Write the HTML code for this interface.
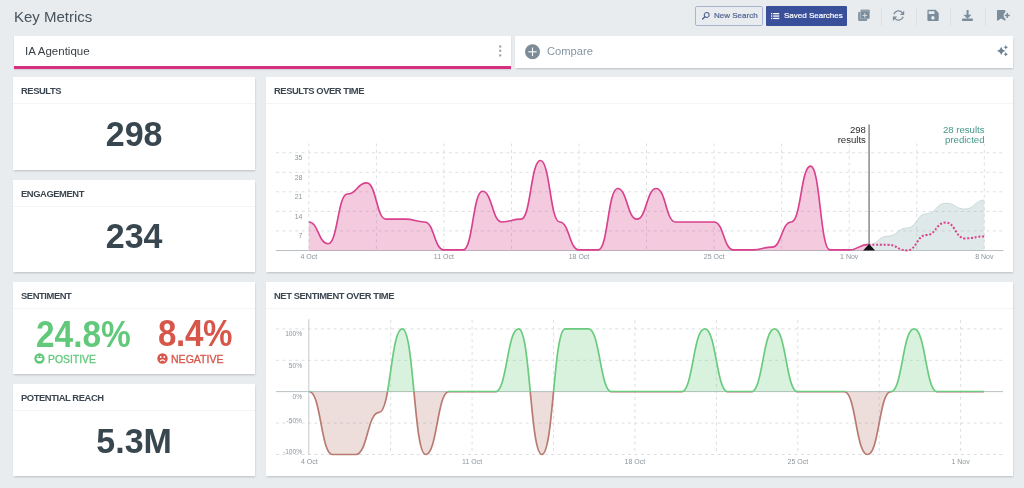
<!DOCTYPE html>
<html><head><meta charset="utf-8">
<style>
html,body{margin:0;padding:0;}
.abs,.card,.btn{will-change:transform;}
body{width:1024px;height:488px;overflow:hidden;background:#e9ecef;font-family:"Liberation Sans",sans-serif;position:relative;color:#3c4852;}
.abs{position:absolute;}
.title{left:13.5px;top:7px;font-size:15px;line-height:20px;color:#47525c;}
.btn{position:absolute;box-sizing:border-box;font-size:8px;line-height:18px;white-space:nowrap;}
.btn span{-webkit-text-stroke:0.2px currentColor;}
.nbtn{left:695px;top:6px;width:68px;height:20px;border:1px solid #a9b3d2;border-radius:2px;color:#51618f;background:transparent;}
.sbtn{left:766px;top:6px;width:81px;height:19.5px;background:#3a4f9a;color:#fff;border-radius:1px;}
.sep{position:absolute;top:6.5px;width:1px;height:19px;background:#dde1e5;}
.card{position:absolute;background:#fff;box-shadow:0 1px 2px -0.5px rgba(0,0,0,0.2);}
.hdr{position:absolute;left:0;right:0;top:0;height:26px;border-bottom:1px solid #f3f4f6;}
.hdr span{position:absolute;left:8px;top:8.8px;font-size:9.4px;font-weight:bold;line-height:10px;color:#3b4650;letter-spacing:-0.42px;white-space:nowrap;}
.big{position:absolute;left:0;right:0;text-align:center;font-weight:bold;font-size:34px;color:#37464f;line-height:34px;transform:scaleY(1.04);transform-origin:50% 0;}
svg text{font-family:"Liberation Sans",sans-serif;}
.g{stroke:#dcdfe2;stroke-width:1;stroke-dasharray:3 3.4;}
.yl{font-size:6.6px;fill:#8c959c;}
.yl1{font-size:6.9px;fill:#8c959c;}
.xl{font-size:7px;fill:#8c959c;}
.mk{font-size:9.6px;fill:#2b2b2b;}
.pr{font-size:9.6px;fill:#45998a;}
</style></head>
<body>
<div class="abs title">Key Metrics</div>

<div class="btn nbtn"><svg class="abs" style="left:4.5px;top:4px" width="10" height="10" viewBox="0 0 10 10"><circle cx="5.7" cy="4" r="2.45" fill="none" stroke="#51618f" stroke-width="1.05"/><line x1="3.9" y1="5.8" x2="1.6" y2="8.1" stroke="#51618f" stroke-width="1.35" stroke-linecap="round"/></svg><span class="abs" style="left:18px;top:0.3px">New Search</span></div>
<div class="btn sbtn"><svg class="abs" style="left:5px;top:6.5px" width="10" height="8" viewBox="0 0 10 8" fill="#fff"><rect x="0" y="0" width="1.3" height="1.3"/><rect x="0" y="2.4" width="1.3" height="1.3"/><rect x="0" y="4.8" width="1.3" height="1.3"/><rect x="2.2" y="0" width="6.1" height="1.3"/><rect x="2.2" y="2.4" width="6.1" height="1.3"/><rect x="2.2" y="4.8" width="6.1" height="1.3"/></svg><span class="abs" style="left:18px;top:1px">Saved Searches</span></div>

<!-- toolbar icons -->
<svg class="abs" style="left:850px;top:0" width="174" height="34" viewBox="850 0 174 34">
 <g fill="#7b8c9a">
  <!-- copy plus -->
  <rect x="858.1" y="11.9" width="9.1" height="9" rx="1.2" fill="#8595a2"/>
  <rect x="860.3" y="9.5" width="9.6" height="9.6" rx="1" fill="#e3e7ea"/>
  <rect x="860.6" y="9.8" width="9" height="9" rx="0.9"/>
  <rect x="860.6" y="9.8" width="9" height="1.9" fill="#93a1ac"/>
  <rect x="862.5" y="14.9" width="4.6" height="1" fill="#d5dce1"/>
  <rect x="864.3" y="13.1" width="1" height="4.6" fill="#d5dce1"/>
  <!-- save -->
  <path d="M928.2,9.8 h7.4 l3.1,3.1 v7.2 a0.8,0.8 0 0 1 -0.8,0.8 h-9.7 a0.8,0.8 0 0 1 -0.8,-0.8 v-9.5 a0.8,0.8 0 0 1 0.8,-0.8 z M928.7,11.2 v2.8 h5.8 v-2.8 z M932.9,16 a1.75,1.75 0 1 0 0.01,0 z" fill-rule="evenodd"/>
  <!-- download -->
  <rect x="966.6" y="10" width="2" height="5.2"/>
  <path d="M963.4,14.8 h8.2 l-4.1,3.9 z"/>
  <rect x="961.9" y="18.6" width="11.1" height="2.3" rx="0.9"/>
  <!-- bookmark plus -->
  <path d="M997.9,9.9 h6.6 a0.9,0.9 0 0 1 0.9,0.9 v1.2 a4.1,4.1 0 0 0 0,6.8 v2.2 l-4.2,-2.6 -4.2,2.6 v-10.2 a0.9,0.9 0 0 1 0.9,-0.9 z"/>
  <rect x="1004.8" y="14.7" width="5" height="1.5"/>
  <rect x="1006.55" y="12.95" width="1.5" height="5"/>
 </g>
 <!-- refresh -->
 <g fill="none" stroke="#7b8c9a" stroke-width="1.35">
  <path d="M893.9,14.2 a4.9,4.9 0 0 1 8.4,-1.6"/>
  <path d="M903.2,16.8 a4.9,4.9 0 0 1 -8.4,1.6"/>
 </g>
 <g fill="#7b8c9a">
  <path d="M904.2,10.6 v4.3 h-4.3 z"/>
  <path d="M892.9,20.9 v-4.3 h4.3 z"/>
 </g>
</svg>
<div class="sep" style="left:881.3px"></div>
<div class="sep" style="left:915.8px"></div>
<div class="sep" style="left:950.3px"></div>
<div class="sep" style="left:985.3px"></div>

<!-- search card -->
<div class="card" style="left:14px;top:36px;width:497.3px;height:32.5px;box-shadow:0 1px 1.5px rgba(0,0,0,0.12);">
  <div class="abs" style="left:10.5px;top:8px;font-size:11.5px;line-height:14px;color:#3a3f44;">IA Agentique</div>
  <svg class="abs" style="left:484px;top:8px" width="5" height="14"><circle cx="2.2" cy="2.5" r="1.2" fill="#9ea7ae"/><circle cx="2.2" cy="6.8" r="1.2" fill="#9ea7ae"/><circle cx="2.2" cy="11.4" r="1.2" fill="#9ea7ae"/></svg>
  <div class="abs" style="left:0;right:0;bottom:0;height:2.5px;background:#d52f7d;"></div>
</div>
<!-- compare card -->
<div class="card" style="left:515px;top:36px;width:498px;height:31.8px;">
  <svg class="abs" style="left:9.5px;top:7.5px" width="16" height="16"><circle cx="7.5" cy="7.8" r="7.5" fill="#7b8b97"/><rect x="6.95" y="3.6" width="1.1" height="8.4" fill="#fff"/><rect x="3.3" y="7.25" width="8.4" height="1.1" fill="#fff"/></svg>
  <div class="abs" style="left:31.5px;top:8px;font-size:11.2px;line-height:14px;color:#8796a1;">Compare</div>
  <svg class="abs" style="left:480px;top:8px" width="14" height="14" viewBox="0 0 14 14" fill="#6f8291"><path d="M6.2,2.5 Q7,6.1 10.6,6.9 Q7,7.7 6.2,11.3 Q5.4,7.7 1.8,6.9 Q5.4,6.1 6.2,2.5 Z"/><path d="M10.8,1 Q11.2,2.8 13,3.2 Q11.2,3.6 10.8,5.4 Q10.4,3.6 8.6,3.2 Q10.4,2.8 10.8,1 Z"/><path d="M10.8,8.1 Q11.2,9.9 13,10.3 Q11.2,10.7 10.8,12.5 Q10.4,10.7 8.6,10.3 Q10.4,9.9 10.8,8.1 Z"/></svg>
</div>

<!-- left cards -->
<div class="card" style="left:13px;top:77px;width:242.2px;height:93px;">
  <div class="hdr"><span>RESULTS</span></div>
  <div class="big" style="top:38.5px;">298</div>
</div>
<div class="card" style="left:13px;top:180px;width:242.2px;height:92px;">
  <div class="hdr"><span>ENGAGEMENT</span></div>
  <div class="big" style="top:37.5px;">234</div>
</div>
<div class="card" style="left:13px;top:282px;width:242.2px;height:92px;">
  <div class="hdr"><span>SENTIMENT</span></div>
  <div class="abs" style="left:22.5px;top:36.7px;font-size:33.4px;line-height:34px;font-weight:bold;color:#62c97b;transform:scaleY(1.1);transform-origin:0 80%;">24.8%</div>
  <div class="abs" style="left:145.3px;top:36.3px;font-size:33.1px;letter-spacing:-0.35px;line-height:34px;font-weight:bold;color:#d6574a;transform:scaleY(1.1);transform-origin:0 80%;">8.4%</div>
  <svg class="abs" style="left:21.1px;top:71px" width="11" height="11" viewBox="0 0 11 11"><circle cx="5.45" cy="5.5" r="5.15" fill="#62c97b"/><circle cx="3.8" cy="3.5" r="0.85" fill="#fff"/><circle cx="7.1" cy="3.5" r="0.85" fill="#fff"/><path d="M2.4,4.9 h6.1 a3.05,3.1 0 0 1 -6.1,0 z" fill="#fff"/></svg>
  <div class="abs" style="left:35px;top:72px;font-size:10.4px;line-height:11px;color:#62c97b;-webkit-text-stroke:0.3px #62c97b;">POSITIVE</div>
  <svg class="abs" style="left:144px;top:71px" width="11" height="11" viewBox="0 0 11 11"><circle cx="5.5" cy="5.5" r="5.2" fill="#d6574a"/><circle cx="3.7" cy="4" r="0.9" fill="#fff"/><circle cx="7.3" cy="4" r="0.9" fill="#fff"/><path d="M3.2,8.3 a2.5,2.3 0 0 1 4.6,0" fill="none" stroke="#fff" stroke-width="1.1"/></svg>
  <div class="abs" style="left:157.5px;top:72px;font-size:10.55px;line-height:11px;color:#d6574a;-webkit-text-stroke:0.3px #d6574a;">NEGATIVE</div>
</div>
<div class="card" style="left:13px;top:384px;width:242.2px;height:92px;">
  <div class="hdr"><span>POTENTIAL REACH</span></div>
  <div class="big" style="top:38.5px;">5.3M</div>
</div>

<!-- chart cards -->
<div class="card" style="left:266px;top:77px;width:747px;height:195px;">
  <div class="hdr"><span>RESULTS OVER TIME</span></div>
</div>
<div class="card" style="left:266px;top:282px;width:747px;height:194px;">
  <div class="hdr"><span>NET SENTIMENT OVER TIME</span></div>
</div>

<svg class="abs" style="left:0;top:0" width="1024" height="488" viewBox="0 0 1024 488">
<line x1="276.0" y1="152.8" x2="1003.0" y2="152.8" class="g"/>
<text x="302.3" y="160.1" class="yl1" text-anchor="end">35</text>
<line x1="276.0" y1="172.3" x2="1003.0" y2="172.3" class="g"/>
<text x="302.3" y="179.6" class="yl1" text-anchor="end">28</text>
<line x1="276.0" y1="191.8" x2="1003.0" y2="191.8" class="g"/>
<text x="302.3" y="199.2" class="yl1" text-anchor="end">21</text>
<line x1="276.0" y1="211.4" x2="1003.0" y2="211.4" class="g"/>
<text x="302.3" y="218.7" class="yl1" text-anchor="end">14</text>
<line x1="276.0" y1="230.9" x2="1003.0" y2="230.9" class="g"/>
<text x="302.3" y="238.2" class="yl1" text-anchor="end">7</text>
<line x1="308.8" y1="143.5" x2="308.8" y2="250.0" class="g"/>
<line x1="376.4" y1="143.5" x2="376.4" y2="250.0" class="g"/>
<line x1="443.9" y1="143.5" x2="443.9" y2="250.0" class="g"/>
<line x1="511.5" y1="143.5" x2="511.5" y2="250.0" class="g"/>
<line x1="579.0" y1="143.5" x2="579.0" y2="250.0" class="g"/>
<line x1="646.5" y1="143.5" x2="646.5" y2="250.0" class="g"/>
<line x1="714.1" y1="143.5" x2="714.1" y2="250.0" class="g"/>
<line x1="781.7" y1="143.5" x2="781.7" y2="250.0" class="g"/>
<line x1="849.2" y1="143.5" x2="849.2" y2="250.0" class="g"/>
<line x1="916.8" y1="143.5" x2="916.8" y2="250.0" class="g"/>
<line x1="984.3" y1="143.5" x2="984.3" y2="250.0" class="g"/>
<path d="M868.50,244.81 C878.15,244.81 878.15,236.16 887.80,236.16 C897.45,236.16 897.45,228.06 907.10,228.06 C916.75,228.06 916.75,213.81 926.40,213.81 C936.05,213.81 936.05,203.20 945.70,203.20 C955.35,203.20 955.35,209.07 965.00,209.07 C974.65,209.07 974.65,200.13 984.30,200.13 L984.30,250.50 L868.50,250.50 Z" fill="rgba(120,160,162,0.23)"/>
<path d="M868.50,244.81 C878.15,244.81 878.15,236.16 887.80,236.16 C897.45,236.16 897.45,228.06 907.10,228.06 C916.75,228.06 916.75,213.81 926.40,213.81 C936.05,213.81 936.05,203.20 945.70,203.20 C955.35,203.20 955.35,209.07 965.00,209.07 C974.65,209.07 974.65,200.13 984.30,200.13" fill="none" stroke="#c6d6d6" stroke-width="0.9"/>
<line x1="276" y1="250.5" x2="1003.3" y2="250.5" stroke="#b9c0c4" stroke-width="1"/>
<path d="M308.80,221.97 C318.45,221.97 318.45,243.76 328.10,243.76 C337.75,243.76 337.75,194.04 347.40,194.04 C357.05,194.04 357.05,182.87 366.70,182.87 C376.35,182.87 376.35,219.18 386.00,219.18 C395.65,219.18 395.65,219.18 405.30,219.18 C414.95,219.18 414.95,221.97 424.60,221.97 C434.25,221.97 434.25,249.90 443.90,249.90 C453.55,249.90 453.55,249.90 463.20,249.90 C472.85,249.90 472.85,191.25 482.50,191.25 C492.15,191.25 492.15,221.97 501.80,221.97 C511.45,221.97 511.45,219.18 521.10,219.18 C530.75,219.18 530.75,160.53 540.40,160.53 C550.05,160.53 550.05,221.97 559.70,221.97 C569.35,221.97 569.35,249.90 579.00,249.90 C588.65,249.90 588.65,249.90 598.30,249.90 C607.95,249.90 607.95,188.46 617.60,188.46 C627.25,188.46 627.25,219.18 636.90,219.18 C646.55,219.18 646.55,188.46 656.20,188.46 C665.85,188.46 665.85,221.97 675.50,221.97 C685.15,221.97 685.15,221.97 694.80,221.97 C704.45,221.97 704.45,221.97 714.10,221.97 C723.75,221.97 723.75,249.90 733.40,249.90 C743.05,249.90 743.05,249.90 752.70,249.90 C762.35,249.90 762.35,247.11 772.00,247.11 C781.65,247.11 781.65,221.97 791.30,221.97 C800.95,221.97 800.95,166.11 810.60,166.11 C820.25,166.11 820.25,249.90 829.90,249.90 C839.55,249.90 839.55,249.90 849.20,249.90 C858.85,249.90 858.85,244.31 868.50,244.31 L868.50,250.50 L308.80,250.50 Z" fill="rgba(214,51,132,0.26)"/>
<path d="M308.80,221.97 C318.45,221.97 318.45,243.76 328.10,243.76 C337.75,243.76 337.75,194.04 347.40,194.04 C357.05,194.04 357.05,182.87 366.70,182.87 C376.35,182.87 376.35,219.18 386.00,219.18 C395.65,219.18 395.65,219.18 405.30,219.18 C414.95,219.18 414.95,221.97 424.60,221.97 C434.25,221.97 434.25,249.90 443.90,249.90 C453.55,249.90 453.55,249.90 463.20,249.90 C472.85,249.90 472.85,191.25 482.50,191.25 C492.15,191.25 492.15,221.97 501.80,221.97 C511.45,221.97 511.45,219.18 521.10,219.18 C530.75,219.18 530.75,160.53 540.40,160.53 C550.05,160.53 550.05,221.97 559.70,221.97 C569.35,221.97 569.35,249.90 579.00,249.90 C588.65,249.90 588.65,249.90 598.30,249.90 C607.95,249.90 607.95,188.46 617.60,188.46 C627.25,188.46 627.25,219.18 636.90,219.18 C646.55,219.18 646.55,188.46 656.20,188.46 C665.85,188.46 665.85,221.97 675.50,221.97 C685.15,221.97 685.15,221.97 694.80,221.97 C704.45,221.97 704.45,221.97 714.10,221.97 C723.75,221.97 723.75,249.90 733.40,249.90 C743.05,249.90 743.05,249.90 752.70,249.90 C762.35,249.90 762.35,247.11 772.00,247.11 C781.65,247.11 781.65,221.97 791.30,221.97 C800.95,221.97 800.95,166.11 810.60,166.11 C820.25,166.11 820.25,249.90 829.90,249.90 C839.55,249.90 839.55,249.90 849.20,249.90 C858.85,249.90 858.85,244.31 868.50,244.31" fill="none" stroke="#d9408d" stroke-width="1.65"/>
<path d="M868.50,244.81 C878.15,244.81 878.15,244.81 887.80,244.81 C897.45,244.81 897.45,250.40 907.10,250.40 C916.75,250.40 916.75,235.04 926.40,235.04 C936.05,235.04 936.05,222.47 945.70,222.47 C955.35,222.47 955.35,238.39 965.00,238.39 C974.65,238.39 974.65,236.44 984.30,236.44" fill="none" stroke="#d9408d" stroke-width="2" stroke-dasharray="2 1.8"/>
<text x="308.8" y="259" class="xl" text-anchor="middle">4 Oct</text>
<text x="443.9" y="259" class="xl" text-anchor="middle">11 Oct</text>
<text x="579.0" y="259" class="xl" text-anchor="middle">18 Oct</text>
<text x="714.1" y="259" class="xl" text-anchor="middle">25 Oct</text>
<text x="849.2" y="259" class="xl" text-anchor="middle">1 Nov</text>
<text x="984.3" y="259" class="xl" text-anchor="middle">8 Nov</text>
<line x1="869.1" y1="124.5" x2="869.1" y2="250" stroke="#8a8a8a" stroke-width="1.5"/>
<path d="M863.1,250.5 L869.1,244 L875.1,250.5 Z" fill="#111"/>
<text x="865.9" y="133" class="mk" text-anchor="end">298</text>
<text x="865.9" y="142.6" class="mk" text-anchor="end">results</text>
<text x="984.5" y="133" class="pr" text-anchor="end">28 results</text>
<text x="984.5" y="142.6" class="pr" text-anchor="end">predicted</text>
<line x1="276.0" y1="328.9" x2="1003.0" y2="328.9" class="g"/>
<line x1="276.0" y1="360.3" x2="1003.0" y2="360.3" class="g"/>
<line x1="276.0" y1="423.1" x2="1003.0" y2="423.1" class="g"/>
<line x1="276.0" y1="454.5" x2="1003.0" y2="454.5" class="g"/>
<text x="302" y="336.4" class="yl" text-anchor="end">100%</text>
<text x="302" y="367.7" class="yl" text-anchor="end">50%</text>
<text x="302" y="399.3" class="yl" text-anchor="end">0%</text>
<text x="302" y="423.3" class="yl" text-anchor="end">-50%</text>
<text x="302" y="454.1" class="yl" text-anchor="end">-100%</text>
<line x1="390.7" y1="320.0" x2="390.7" y2="454.5" class="g"/>
<line x1="472.1" y1="320.0" x2="472.1" y2="454.5" class="g"/>
<line x1="553.5" y1="320.0" x2="553.5" y2="454.5" class="g"/>
<line x1="634.9" y1="320.0" x2="634.9" y2="454.5" class="g"/>
<line x1="716.4" y1="320.0" x2="716.4" y2="454.5" class="g"/>
<line x1="797.8" y1="320.0" x2="797.8" y2="454.5" class="g"/>
<line x1="879.2" y1="320.0" x2="879.2" y2="454.5" class="g"/>
<line x1="960.6" y1="320.0" x2="960.6" y2="454.5" class="g"/>
<line x1="308.8" y1="319.2" x2="308.8" y2="455" stroke="#c3c9cd" stroke-width="1"/>
<line x1="276" y1="391.6" x2="1003" y2="391.6" stroke="#b9c0c4" stroke-width="1"/>
<defs><clipPath id="up"><rect x="270" y="300" width="740" height="92.05"/></clipPath><clipPath id="dn"><rect x="270" y="392.05" width="740" height="80"/></clipPath></defs>
<g clip-path="url(#up)"><path d="M309.30,391.70 C320.93,391.70 320.93,454.50 332.56,454.50 C344.19,454.50 344.19,454.50 355.82,454.50 C367.45,454.50 367.45,412.42 379.08,412.42 C390.71,412.42 390.71,328.90 402.34,328.90 C413.97,328.90 413.97,454.50 425.60,454.50 C437.23,454.50 437.23,391.70 448.86,391.70 C460.49,391.70 460.49,391.70 472.12,391.70 C483.75,391.70 483.75,391.70 495.38,391.70 C507.01,391.70 507.01,328.90 518.64,328.90 C530.27,328.90 530.27,454.50 541.90,454.50 C553.53,454.50 553.53,328.90 565.16,328.90 C576.79,328.90 576.79,328.90 588.42,328.90 C600.05,328.90 600.05,391.70 611.68,391.70 C623.31,391.70 623.31,391.70 634.94,391.70 C646.57,391.70 646.57,391.70 658.20,391.70 C669.83,391.70 669.83,391.70 681.46,391.70 C693.09,391.70 693.09,328.90 704.72,328.90 C716.35,328.90 716.35,391.70 727.98,391.70 C739.61,391.70 739.61,391.70 751.24,391.70 C762.87,391.70 762.87,328.90 774.50,328.90 C786.13,328.90 786.13,391.70 797.76,391.70 C809.39,391.70 809.39,391.70 821.02,391.70 C832.65,391.70 832.65,391.70 844.28,391.70 C855.91,391.70 855.91,454.50 867.54,454.50 C879.17,454.50 879.17,391.70 890.80,391.70 C902.43,391.70 902.43,328.90 914.06,328.90 C925.69,328.90 925.69,391.70 937.32,391.70 C948.95,391.70 948.95,391.70 960.58,391.70 C972.21,391.70 972.21,391.70 983.84,391.70 L983.84,391.70 L309.30,391.70 Z" fill="rgba(106,203,126,0.26)"/><path d="M309.30,391.70 C320.93,391.70 320.93,454.50 332.56,454.50 C344.19,454.50 344.19,454.50 355.82,454.50 C367.45,454.50 367.45,412.42 379.08,412.42 C390.71,412.42 390.71,328.90 402.34,328.90 C413.97,328.90 413.97,454.50 425.60,454.50 C437.23,454.50 437.23,391.70 448.86,391.70 C460.49,391.70 460.49,391.70 472.12,391.70 C483.75,391.70 483.75,391.70 495.38,391.70 C507.01,391.70 507.01,328.90 518.64,328.90 C530.27,328.90 530.27,454.50 541.90,454.50 C553.53,454.50 553.53,328.90 565.16,328.90 C576.79,328.90 576.79,328.90 588.42,328.90 C600.05,328.90 600.05,391.70 611.68,391.70 C623.31,391.70 623.31,391.70 634.94,391.70 C646.57,391.70 646.57,391.70 658.20,391.70 C669.83,391.70 669.83,391.70 681.46,391.70 C693.09,391.70 693.09,328.90 704.72,328.90 C716.35,328.90 716.35,391.70 727.98,391.70 C739.61,391.70 739.61,391.70 751.24,391.70 C762.87,391.70 762.87,328.90 774.50,328.90 C786.13,328.90 786.13,391.70 797.76,391.70 C809.39,391.70 809.39,391.70 821.02,391.70 C832.65,391.70 832.65,391.70 844.28,391.70 C855.91,391.70 855.91,454.50 867.54,454.50 C879.17,454.50 879.17,391.70 890.80,391.70 C902.43,391.70 902.43,328.90 914.06,328.90 C925.69,328.90 925.69,391.70 937.32,391.70 C948.95,391.70 948.95,391.70 960.58,391.70 C972.21,391.70 972.21,391.70 983.84,391.70" fill="none" stroke="#6acb7e" stroke-width="1.7"/></g>
<g clip-path="url(#dn)"><path d="M309.30,391.70 C320.93,391.70 320.93,454.50 332.56,454.50 C344.19,454.50 344.19,454.50 355.82,454.50 C367.45,454.50 367.45,412.42 379.08,412.42 C390.71,412.42 390.71,328.90 402.34,328.90 C413.97,328.90 413.97,454.50 425.60,454.50 C437.23,454.50 437.23,391.70 448.86,391.70 C460.49,391.70 460.49,391.70 472.12,391.70 C483.75,391.70 483.75,391.70 495.38,391.70 C507.01,391.70 507.01,328.90 518.64,328.90 C530.27,328.90 530.27,454.50 541.90,454.50 C553.53,454.50 553.53,328.90 565.16,328.90 C576.79,328.90 576.79,328.90 588.42,328.90 C600.05,328.90 600.05,391.70 611.68,391.70 C623.31,391.70 623.31,391.70 634.94,391.70 C646.57,391.70 646.57,391.70 658.20,391.70 C669.83,391.70 669.83,391.70 681.46,391.70 C693.09,391.70 693.09,328.90 704.72,328.90 C716.35,328.90 716.35,391.70 727.98,391.70 C739.61,391.70 739.61,391.70 751.24,391.70 C762.87,391.70 762.87,328.90 774.50,328.90 C786.13,328.90 786.13,391.70 797.76,391.70 C809.39,391.70 809.39,391.70 821.02,391.70 C832.65,391.70 832.65,391.70 844.28,391.70 C855.91,391.70 855.91,454.50 867.54,454.50 C879.17,454.50 879.17,391.70 890.80,391.70 C902.43,391.70 902.43,328.90 914.06,328.90 C925.69,328.90 925.69,391.70 937.32,391.70 C948.95,391.70 948.95,391.70 960.58,391.70 C972.21,391.70 972.21,391.70 983.84,391.70 L983.84,391.70 L309.30,391.70 Z" fill="rgba(185,122,114,0.25)"/><path d="M309.30,391.70 C320.93,391.70 320.93,454.50 332.56,454.50 C344.19,454.50 344.19,454.50 355.82,454.50 C367.45,454.50 367.45,412.42 379.08,412.42 C390.71,412.42 390.71,328.90 402.34,328.90 C413.97,328.90 413.97,454.50 425.60,454.50 C437.23,454.50 437.23,391.70 448.86,391.70 C460.49,391.70 460.49,391.70 472.12,391.70 C483.75,391.70 483.75,391.70 495.38,391.70 C507.01,391.70 507.01,328.90 518.64,328.90 C530.27,328.90 530.27,454.50 541.90,454.50 C553.53,454.50 553.53,328.90 565.16,328.90 C576.79,328.90 576.79,328.90 588.42,328.90 C600.05,328.90 600.05,391.70 611.68,391.70 C623.31,391.70 623.31,391.70 634.94,391.70 C646.57,391.70 646.57,391.70 658.20,391.70 C669.83,391.70 669.83,391.70 681.46,391.70 C693.09,391.70 693.09,328.90 704.72,328.90 C716.35,328.90 716.35,391.70 727.98,391.70 C739.61,391.70 739.61,391.70 751.24,391.70 C762.87,391.70 762.87,328.90 774.50,328.90 C786.13,328.90 786.13,391.70 797.76,391.70 C809.39,391.70 809.39,391.70 821.02,391.70 C832.65,391.70 832.65,391.70 844.28,391.70 C855.91,391.70 855.91,454.50 867.54,454.50 C879.17,454.50 879.17,391.70 890.80,391.70 C902.43,391.70 902.43,328.90 914.06,328.90 C925.69,328.90 925.69,391.70 937.32,391.70 C948.95,391.70 948.95,391.70 960.58,391.70 C972.21,391.70 972.21,391.70 983.84,391.70" fill="none" stroke="#b97a72" stroke-width="1.7"/></g>
<text x="309.3" y="464" class="xl" text-anchor="middle">4 Oct</text>
<text x="472.1" y="464" class="xl" text-anchor="middle">11 Oct</text>
<text x="634.9" y="464" class="xl" text-anchor="middle">18 Oct</text>
<text x="797.8" y="464" class="xl" text-anchor="middle">25 Oct</text>
<text x="960.6" y="464" class="xl" text-anchor="middle">1 Nov</text>
</svg>
</body></html>
